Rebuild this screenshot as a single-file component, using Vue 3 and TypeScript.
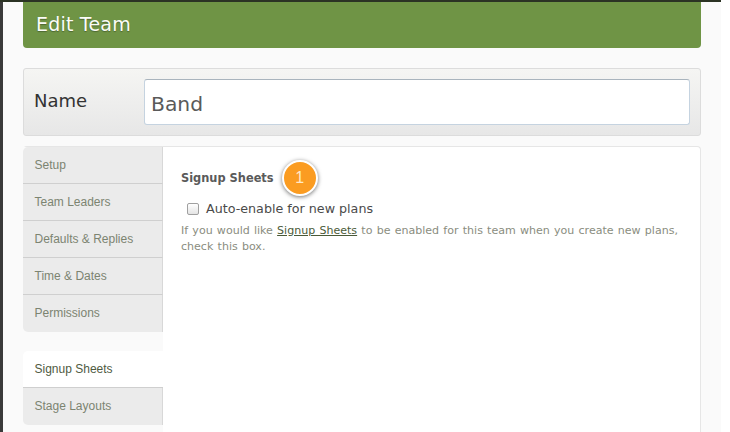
<template>
  <div class="screen">
    <div class="modal">
      <header class="modal-head">Edit Team</header>
      <div class="name-row">
        <label class="name-label">Name</label>
        <div class="name-input">Band</div>
      </div>
      <div class="panel">
        <nav class="tabs">
          <div class="tab-group">
            <div v-for="t in mainTabs" :key="t" class="tab">{{ t }}</div>
          </div>
          <div class="tab-group second">
            <div v-for="t in otherTabs" :key="t" class="tab" :class="{ active: t === activeTab }">{{ t }}</div>
          </div>
        </nav>
        <section class="content">
          <div class="title-row">
            <h3 class="title">Signup Sheets</h3>
            <span class="step">1</span>
          </div>
          <label class="check-row">
            <span class="check"></span>
            Auto-enable for new plans
          </label>
          <p class="hint">
            If you would like <a class="link">Signup Sheets</a> to be enabled for this team when you create new plans, check this box.
          </p>
        </section>
      </div>
    </div>
  </div>
</template>

<script setup lang="ts">
const mainTabs: string[] = ['Setup', 'Team Leaders', 'Defaults & Replies', 'Time & Dates', 'Permissions'];
const otherTabs: string[] = ['Signup Sheets', 'Stage Layouts'];
const activeTab = 'Signup Sheets';
</script>

<style scoped>
.screen {
    width: 730px;
    height: 432px;
    overflow: hidden;
    background: linear-gradient(to right, #3a3a3a 3px, #ffffff 3px);
    font-family: "DejaVu Sans", Verdana, sans-serif;
}

.screen::before {
    content: "";
    display: block;
    height: 2px;
    width: 721px;
    background: #2b3324;
}

.modal {
    width: 678px;
    height: 430px;
    margin-left: 3px;
    padding: 0 20px;
    background: #fafafa;
    border-top-left-radius: 4px;
    border-top-right-radius: 4px;
}

.modal-head {
    height: 46px;
    padding-left: 13px;
    line-height: 44px;
    font-size: 19px;
    letter-spacing: 0.2px;
    color: #fbfcf8;
    text-shadow: 0 1px 1px rgba(0, 0, 0, 0.3);
    background: #6f9445;
    border-radius: 0 0 4px 4px;
}

.name-row {
    box-sizing: border-box;
    height: 68px;
    margin-top: 20px;
    padding: 10px;
    display: flex;
    align-items: center;
    border: 1px solid #dcdcdc;
    border-radius: 3px;
    background: linear-gradient(#f5f5f3, #e7e7e7);
}

.name-label {
    width: 110px;
    font-size: 18px;
    color: #333;
    margin-bottom: 3px;
}

.name-input {
    box-sizing: border-box;
    flex: 1;
    height: 46px;
    line-height: 48px;
    padding-left: 6px;
    font-size: 20.3px;
    color: #5a5a5a;
    background: #fff;
    border: 1px solid #c5d3e0;
    border-top-color: #a9b4bd;
    border-radius: 3px;
}

.panel {
    display: flex;
    height: 300px;
    margin-top: 10px;
    background: #fff;
    border: 1px solid #e6e6e6;
    border-left: none;
    border-bottom: none;
    border-radius: 4px 4px 0 0;
}

.tabs {
    width: 140px;
    flex-shrink: 0;
    font-family: "Liberation Sans", Arial, sans-serif;
    font-size: 12px;
    background: #fafafa;
}

.tab-group.second {
    margin-top: 19px;
}

.tab {
    box-sizing: border-box;
    height: 37px;
    padding-left: 11.5px;
    line-height: 37px;
    color: #7c8471;
    background: #ebebeb;
    border-bottom: 1px solid #cfcfcf;
    border-right: 1px solid #d8d8d8;
}

.tab:first-child {
    border-top-left-radius: 5px;
}

.tab:last-child {
    border-bottom: none;
    border-bottom-left-radius: 5px;
}

.tab.active {
    background: #fff;
    color: #4f5b42;
    border-right: none;
}

.content {
    flex: 1;
    padding: 15px 18px;
}

.title-row {
    display: flex;
    align-items: center;
    height: 32px;
}

.title {
    margin: 0;
    font-size: 11.4px;
    font-weight: bold;
    color: #5a5a5a;
}

.step {
    width: 36px;
    height: 36px;
    margin-left: 8px;
    line-height: 32px;
    text-align: center;
    font-size: 16px;
    color: #ffe9c8;
    background: #fb9c21;
    border-radius: 50%;
    border: 2px solid #fff;
    box-sizing: border-box;
    box-shadow: 0 1px 4px rgba(0, 0, 0, 0.55);
    font-family: "Liberation Sans", Arial, sans-serif;
    flex-shrink: 0;
}

.check-row {
    display: flex;
    align-items: center;
    margin: 7px 0 0 6px;
    font-size: 12.7px;
    color: #4a4a4a;
}

.check {
    box-sizing: border-box;
    width: 12px;
    height: 12px;
    margin-right: 7px;
    border: 1px solid #a0a0a0;
    border-radius: 2px;
    background: linear-gradient(#fff, #e4e4e4);
}

.hint {
    margin: 7px 0 0;
    width: 510px;
    font-size: 11.05px;
    word-spacing: 0.7px;
    line-height: 16px;
    color: #8a8d80;
}

.link {
    color: #4a5a38;
    text-decoration: underline;
}
</style>
